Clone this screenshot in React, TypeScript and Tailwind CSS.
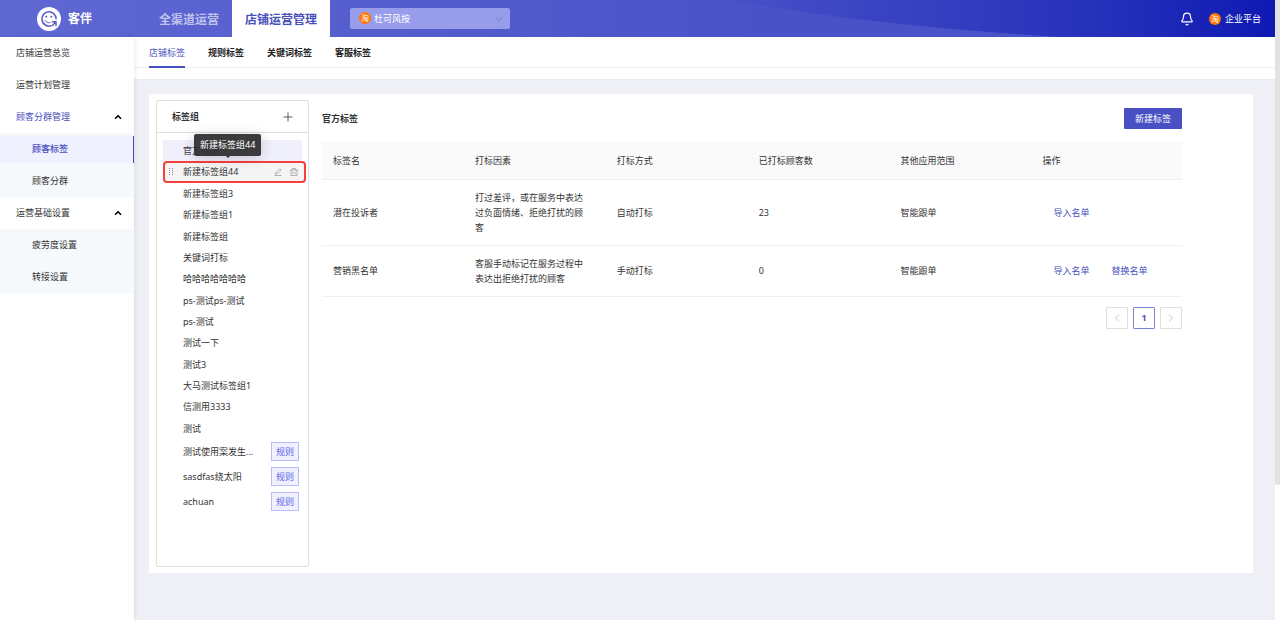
import React from "react";
import { Bell, ChevronDown, ChevronLeft, ChevronRight, ChevronUp, Plus } from "lucide-react";

const groups = [
  "新建标签组3",
  "新建标签组1",
  "新建标签组",
  "关键词打标",
  "哈哈哈哈哈哈哈",
  "ps-测试ps-测试",
  "ps-测试",
  "测试一下",
  "测试3",
  "大马测试标签组1",
  "信测用3333",
  "测试",
];

const ruleGroups = ["测试使用案发生...", "sasdfas绕太阳", "achuan"];

const columns = ["标签名", "打标因素", "打标方式", "已打标顾客数", "其他应用范围", "操作"];

const rows = [
  {
    name: "潜在投诉者",
    factor: "打过差评，或在服务中表达过负面情绪、拒绝打扰的顾客",
    way: "自动打标",
    count: 23,
    scope: "智能跟单",
    actions: ["导入名单"],
  },
  {
    name: "营销黑名单",
    factor: "客服手动标记在服务过程中表达出拒绝打扰的顾客",
    way: "手动打标",
    count: 0,
    scope: "智能跟单",
    actions: ["导入名单", "替换名单"],
  },
];

function Logo() {
  return (
    <svg className="size-6" viewBox="0 0 24 24" fill="none">
      <circle cx="12" cy="12" r="12" fill="#fff" />
      <path
        d="M14 18.700A7.100 7.100 0 1 1 19.100 11.800"
        stroke="#5a60cc"
        strokeWidth="1.600"
        strokeLinecap="round"
      />
      <path d="M8 13.500c1 1.800 3 2.600 5 2.200" stroke="#5a60cc" strokeWidth="1" strokeLinecap="round" />
      <circle cx="9.300" cy="9.800" r="1" fill="#5a60cc" />
      <circle cx="14.300" cy="9.800" r="1" fill="#5a60cc" />
      <path d="M14.800 14.800h4.200v4.200M18.700 15.100l-3.700 3.900" stroke="#5a60cc" strokeWidth="1.500" />
    </svg>
  );
}

function TaoBadge() {
  return (
    <span className="flex size-3 shrink-0 items-center justify-center rounded-full bg-[#ff7700] text-[8px] leading-none text-white">
      淘
    </span>
  );
}

function Header() {
  return (
    <header className="relative flex h-[37px] items-stretch bg-linear-to-r from-[#6068d2] via-[#4a52c8] via-60% to-[#4a52c8] text-white">
      <svg
        className="absolute inset-y-0 right-0 h-full w-[50%]"
        viewBox="0 0 638 37"
        preserveAspectRatio="none"
      >
        <defs>
          <linearGradient id="wave" x1="0" y1="0" x2="1" y2="0">
            <stop offset="0" stopColor="#4850c8" />
            <stop offset="0.7" stopColor="#2430ba" />
            <stop offset="1" stopColor="#0f19b3" />
          </linearGradient>
        </defs>
        <path d="M90 0C180 16 280 28 422 37H638V0Z" fill="url(#wave)" />
      </svg>
      <div className="relative flex w-[133px] items-center gap-[7px] pl-[37px]">
        <Logo />
        <span className="text-xs font-bold">客伴</span>
      </div>
      <nav className="relative flex pt-0.5 text-xs font-bold">
        <a href="#all" className="-mt-0.5 flex items-center pt-0.5 pr-[13px] pl-[26px] text-[#bfc3ee]">
          全渠道运营
        </a>
        <a href="#shop" className="-mt-0.5 flex items-center bg-white px-[13px] pt-0.5 text-[#4850bd]">
          店铺运营管理
        </a>
      </nav>
      <label className="relative ml-5 flex w-40 items-center self-center rounded-xs bg-[#979deb]">
        <span className="absolute top-1 left-[9px]">
          <TaoBadge />
        </span>
        <select aria-label="店铺" className="h-[21px] w-full appearance-none bg-transparent pl-6 text-[9px] outline-none">
          <option>杜可风按</option>
        </select>
        <ChevronDown className="absolute right-1 size-3.5 text-[#7379c8]" strokeWidth={1.5} />
      </label>
      <div className="relative ml-auto flex items-center gap-[15px] pr-3.5 text-[9px]">
        <button type="button" aria-label="通知">
          <Bell className="size-3.5" strokeWidth={2} />
        </button>
        <a href="#platform" className="flex items-center gap-1">
          <TaoBadge />
          企业平台
        </a>
      </div>
    </header>
  );
}

function Sidebar() {
  return (
    <aside className="relative w-[134px] shrink-0 bg-white leading-8 shadow-[0_0_5px_rgba(0,0,0,0.12)]">
      <a href="#overview" className="block px-4">
        店铺运营总览
      </a>
      <a href="#plan" className="block px-4">
        运营计划管理
      </a>
      <button type="button" className="flex w-full items-center justify-between pr-[11px] pl-4 text-[#4850bd]">
        顾客分群管理
        <ChevronUp className="size-2.5 text-black" strokeWidth={4} />
      </button>
      <div className="bg-[#f5f9fc]">
        <a href="#tags" className="flex h-8 items-center">
          <span className="flex h-[27px] w-full items-center border-r border-[#3f48bd] bg-[#eff1fe] pl-8 font-medium text-[#4850bd]">
            顾客标签
          </span>
        </a>
        <a href="#segments" className="block pl-8">
          顾客分群
        </a>
      </div>
      <button type="button" className="flex w-full items-center justify-between pr-[11px] pl-4">
        运营基础设置
        <ChevronUp className="size-2.5 text-black" strokeWidth={4} />
      </button>
      <div className="bg-[#f5f9fc]">
        <a href="#fatigue" className="block pl-8">
          疲劳度设置
        </a>
        <a href="#transfer" className="block pl-8">
          转接设置
        </a>
      </div>
    </aside>
  );
}

function Tabs() {
  return (
    <div className="h-[43px] border-b border-[#e8eaef] bg-white">
      <nav className="flex h-[31px] gap-[23px] border-b border-[#f0f0f2] pl-[15px] leading-8 font-bold text-[#222]">
        <a href="#shop-tags" className="h-[31px] border-b-2 border-[#4850bd] font-normal text-[#4850bd]">
          店铺标签
        </a>
        <a href="#rule-tags">规则标签</a>
        <a href="#keyword-tags">关键词标签</a>
        <a href="#service-tags">客服标签</a>
      </nav>
    </div>
  );
}

function EditIcon() {
  return (
    <svg className="size-2" viewBox="0 0 16 16" fill="none" stroke="#999" strokeWidth="1.5">
      <path d="M3 12.5l.7-3.500L11.500 1.200l2.800 2.800L6.500 11.800zM1 15h14" />
    </svg>
  );
}

function TrashIcon() {
  return (
    <svg className="size-2" viewBox="0 0 16 16" fill="none" stroke="#999" strokeWidth="1.5">
      <path d="M0 4h16M5 4V1h6v3M2 4v11h12V4M6 7.500v4.500M10 7.500v4.500" />
    </svg>
  );
}

function TagGroups() {
  return (
    <section className="h-[467px] w-[153px] shrink-0 rounded-xs border border-[#dfdfdf]">
      <div className="flex h-8 items-center justify-between border-b border-[#dfdfdf] pr-[13px] pl-[15px]">
        <h2 className="font-bold">标签组</h2>
        <button type="button" aria-label="新增标签组">
          <Plus className="size-3.5 text-[#444]" strokeWidth={1.5} />
        </button>
      </div>
      <div className="px-1.5 pt-[7px]">
        <div className="h-[21px] bg-[#f0f0fd] pl-5 leading-[21px]">官方标签</div>
        <div className="relative -mr-1 flex h-[22px] items-center rounded-sm border-2 border-[#f5403b] bg-[#f5f5f5] pr-1.5 pl-1">
          <svg className="mr-2 h-2 w-1.5" viewBox="0 0 6 8" fill="#888">
            <path d="M0 0h1v1H0zM0 2h1v1H0zM0 4h1v1H0zM0 6h1v1H0zM3 0h1v1H3zM3 2h1v1H3zM3 4h1v1H3zM3 6h1v1H3z" />
          </svg>
          <span className="flex-1">新建标签组44</span>
          <button type="button" aria-label="编辑" className="mr-2">
            <EditIcon />
          </button>
          <button type="button" aria-label="删除">
            <TrashIcon />
          </button>
          <div
            role="tooltip"
            className="absolute bottom-[25px] left-[29px] rounded-xs bg-[#303034]/95 px-1.5 leading-[22px] whitespace-nowrap text-white shadow-[0_2px_14px_rgba(0,0,0,0.18)]"
          >
            新建标签组44
            <span className="absolute top-full left-1/2 h-0 w-0 -translate-x-1/2 border-x-2 border-t-2 border-x-transparent border-t-[#303034]" />
          </div>
        </div>
        <ul className="grid h-64 auto-rows-fr items-center">
          {groups.map((group) => (
            <li key={group} className="pl-5">
              {group}
            </li>
          ))}
        </ul>
        <ul>
          {ruleGroups.map((name) => (
            <li key={name} className="flex h-[25px] items-center justify-between pr-[3px] pl-5">
              {name}
              <span className="border border-[#b9bdfb] bg-[#f0f0ff] px-1 leading-[17px] text-[#6068e8]">规则</span>
            </li>
          ))}
        </ul>
      </div>
    </section>
  );
}

function TagTable() {
  return (
    <section className="mr-16 flex-1 pt-2">
      <div className="flex items-center justify-between">
        <h2 className="font-bold">官方标签</h2>
        <button type="button" className="h-[21px] rounded-[1px] bg-[#4850c4] px-[11px] text-white">
          新建标签
        </button>
      </div>
      <table className="mt-[13px] w-full table-fixed text-left leading-[15px]">
        <thead className="bg-[#fafafa]">
          <tr className="h-[37px] border-b border-[#f0f0f0]">
            {columns.map((column) => (
              <th key={column} className="w-[16.5%] pl-[11px] font-normal last:w-auto">
                {column}
              </th>
            ))}
          </tr>
        </thead>
        <tbody>
          {rows.map((row) => (
            <tr key={row.name} className="border-b border-[#f0f0f0]">
              <td className="py-2.5 pl-[11px]">{row.name}</td>
              <td className="py-2.5 pr-[17px] pl-[11px]">{row.factor}</td>
              <td className="py-2.5 pl-[11px]">{row.way}</td>
              <td className="py-2.5 pl-[11px]">{row.count}</td>
              <td className="py-2.5 pl-[11px]">{row.scope}</td>
              <td className="py-2.5 pl-[22px]">
                <div className="flex gap-[22px] whitespace-nowrap text-[#4850bd]">
                  {row.actions.map((action) => (
                    <a key={action} href="#action">
                      {action}
                    </a>
                  ))}
                </div>
              </td>
            </tr>
          ))}
        </tbody>
      </table>
      <div className="mt-2.5 flex justify-end gap-[5px]">
        <button type="button" aria-label="上一页" className="flex size-[22px] items-center justify-center rounded-[1px] border border-[#dedede] text-[#c4c4c4]">
          <ChevronLeft className="size-3" strokeWidth={2} />
        </button>
        <button type="button" className="size-[22px] rounded-[1px] border border-[#7c82d6] font-bold text-[#4850bd]">
          1
        </button>
        <button type="button" aria-label="下一页" className="flex size-[22px] items-center justify-center rounded-[1px] border border-[#dedede] text-[#c4c4c4]">
          <ChevronRight className="size-3" strokeWidth={2} />
        </button>
      </div>
    </section>
  );
}

function App() {
  return (
    <div className="flex min-h-screen bg-white font-['Noto_Sans','Noto_Sans_CJK_SC',sans-serif] text-[9px] text-[#333]">
      <div className="flex min-w-0 flex-1 flex-col">
        <Header />
        <div className="flex flex-1">
          <Sidebar />
          <main className="min-w-0 flex-1 bg-[#eff0f5]">
            <Tabs />
            <div className="mt-3.5 mr-[22px] ml-[15px] flex gap-[13px] bg-white px-[7px] py-1.5">
              <TagGroups />
              <TagTable />
            </div>
          </main>
        </div>
      </div>
      <div className="w-[5px] shrink-0">
        <div className="h-[485px] rounded-b-sm bg-[#e2e2e2]" />
      </div>
    </div>
  );
}

export default App;
